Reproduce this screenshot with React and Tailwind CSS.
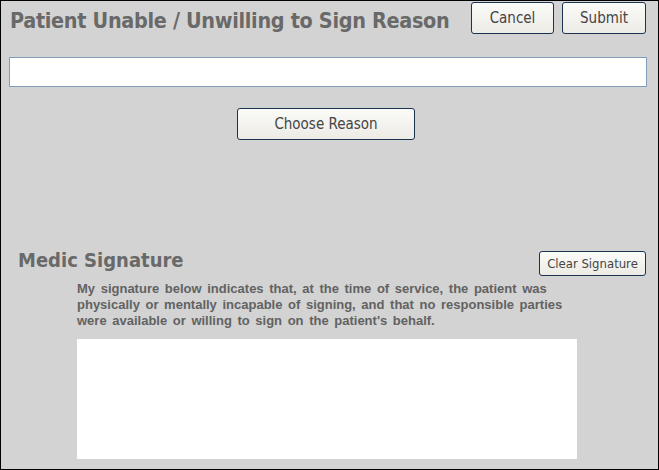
import React from "react";

function XpButton({ children, className = "" }) {
  return (
    <button
      className={`border border-[#1c3350] rounded-[3px] bg-gradient-to-b from-[#fbfbf9] to-[#ecebe5] text-[#444] leading-none ${className}`}
    >
      {children}
    </button>
  );
}

export default function App() {
  return (
    <div className="w-[659px] h-[470px] border border-black bg-[#d3d3d3] font-['DejaVu_Sans_Condensed','DejaVu_Sans',sans-serif] flex flex-col overflow-hidden">
      {/* header */}
      <div className="flex items-start pl-[9px] pr-[12px] pt-[1px]">
        <h1 className="flex-1 pt-[6px] text-[21.4px] font-bold text-[#696969] leading-[26px] tracking-[-0.3px]">
          Patient Unable / Unwilling to Sign Reason
        </h1>
        <div className="flex gap-[8px]">
          <XpButton className="w-[83px] h-[32px] text-[15px]">Cancel</XpButton>
          <XpButton className="w-[84px] h-[32px] text-[15px]">Submit</XpButton>
        </div>
      </div>

      {/* reason input */}
      <div className="pl-[8px] pr-[11px] mt-[23px]">
        <input className="w-full h-[30px] bg-white border border-[#7f9db9] outline-none" />
      </div>

      <div className="mt-[21px] pl-[236px]">
        <XpButton className="w-[178px] h-[32px] text-[15px]">Choose Reason</XpButton>
      </div>

      {/* medic signature */}
      <div className="mt-[111px] flex items-start pl-[17px] pr-[12px]">
        <h2 className="flex-1 text-[20px] font-bold text-[#696969] leading-[18px]">
          Medic Signature
        </h2>
        <XpButton className="w-[107px] h-[25px] text-[13px]">Clear Signature</XpButton>
      </div>

      <div className="pl-[76px] mt-[5px]">
        <p className="font-['Liberation_Sans',sans-serif] text-[13px] font-bold text-[#626262] leading-[16px] [word-spacing:2px] whitespace-nowrap">
          My signature below indicates that, at the time of service, the patient was<br />
          physically or mentally incapable of signing, and that no responsible parties<br />
          were available or willing to sign on the patient's behalf.
        </p>
        <div className="mt-[10px] w-[500px] h-[120px] bg-white" />
      </div>
    </div>
  );
}
